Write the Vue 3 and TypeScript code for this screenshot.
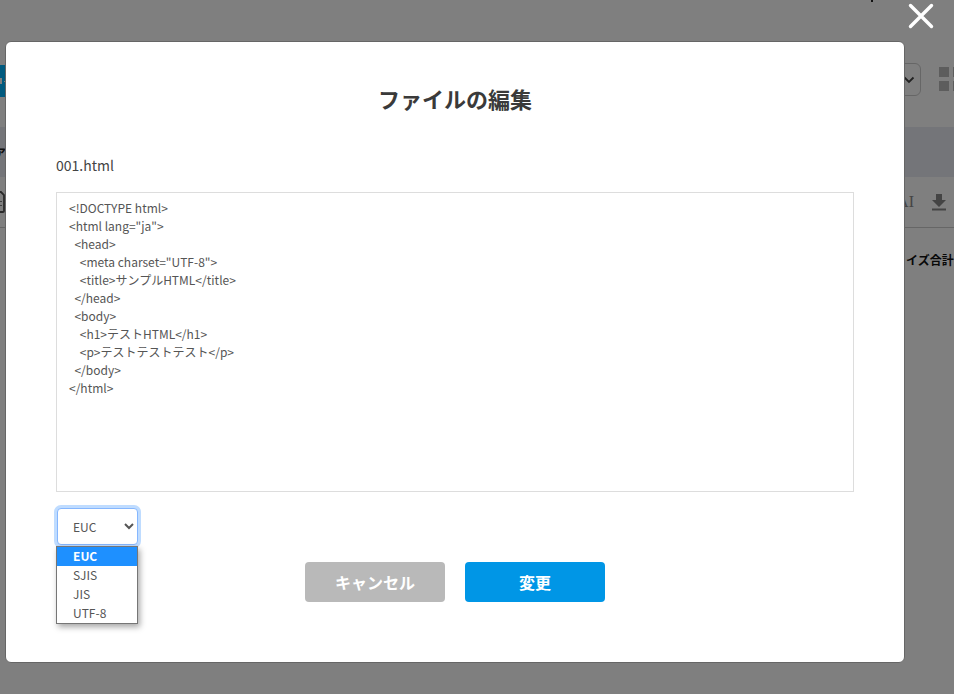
<script setup lang="ts">
const source = `<!DOCTYPE html>
<html lang="ja">
  <head>
    <meta charset="UTF-8">
    <title>サンプルHTML</title>
  </head>
  <body>
    <h1>テストHTML</h1>
    <p>テストテストテスト</p>
  </body>
</html>`
const encodings: string[] = ['EUC', 'SJIS', 'JIS', 'UTF-8']
</script>

<template>
  <div class="page">
    <div class="bg">
      <span class="bg-tick"></span>
      <div class="bg-top">
        <div class="bg-blue"><span class="bg-blue-mark"></span><span class="bg-blue-dash"></span></div>
        <div class="bg-controls">
          <div class="bg-select">
            <svg width="12" height="8" viewBox="0 0 12 8"><path d="M1.500 1.500 6 6l4.500-4.500" fill="none" stroke="#444" stroke-width="1.800" /></svg>
          </div>
          <div class="bg-grid"><i></i><i></i><i></i><i></i></div>
        </div>
      </div>
      <div class="bg-band"><span class="bg-band-text">ア</span></div>
      <div class="bg-tools">
        <svg class="bg-file" width="6" height="24" viewBox="0 0 6 24"><path d="M-6 2h7l3 3v16q0 1-1 1h-9z" fill="none" stroke="#555" stroke-width="1.800" /><path d="M1 11v1M1 15v1" stroke="#555" stroke-width="1.500" /></svg>
        <div class="bg-tool-right">
          <span class="bg-ai">AI</span>
          <svg width="14" height="17" viewBox="0 0 14 17"><path d="M4 0h6v6h4l-7 7-7-7h4zM0 14.500h14v2H0z" fill="#888" /></svg>
        </div>
      </div>
      <div class="bg-total">イズ合計</div>
    </div>

    <div class="overlay">
      <svg class="close" width="26" height="26" viewBox="0 0 26 26" aria-label="閉じる">
        <path d="M2.500 2.500 23.500 23.500M23.500 2.500 2.500 23.500" stroke="#fff" stroke-width="3.400" stroke-linecap="round" fill="none" />
      </svg>
      <section class="modal">
        <h2 class="title">ファイルの編集</h2>
        <p class="filename">001.html</p>
        <textarea class="editor" readonly :value="source"></textarea>
        <div class="select-wrap">
          <select class="select">
            <option v-for="e in encodings" :key="e">{{ e }}</option>
          </select>
          <ul class="options">
            <li v-for="(e, i) in encodings" :key="e" :class="{ active: i === 0 }">{{ e }}</li>
          </ul>
        </div>
        <div class="actions">
          <button class="btn cancel" type="button">キャンセル</button>
          <button class="btn submit" type="button">変更</button>
        </div>
      </section>
    </div>
  </div>
</template>

<style>
html, body { margin: 0; background: #fff; }
</style>

<style scoped>
.page {
  position: relative;
  width: 954px;
  height: 694px;
  overflow: hidden;
  font-family: "Noto Sans CJK JP", "Noto Sans", sans-serif;
  color: #333;
}
.bg { display: flex; flex-direction: column; height: 100%; }
.bg-tick {
  position: absolute;
  left: 871px;
  top: 0;
  width: 2px;
  height: 2px;
  background: #222;
}
.bg-top {
  height: 127px;
  display: flex;
  justify-content: space-between;
  padding-top: 65px;
  box-sizing: border-box;
}
.bg-blue {
  width: 10px;
  height: 32px;
  background: #00b4ff;
  display: flex;
  align-items: center;
  gap: 2px;
}
.bg-blue-mark { width: 2px; height: 6px; background: #fff; }
.bg-blue-dash { width: 3px; height: 1px; background: #fff; }
.bg-controls { display: flex; gap: 18px; height: 32px; }
.bg-select {
  width: 40px;
  height: 33px;
  margin-top: -2px;
  box-sizing: border-box;
  border: 1px solid #ccc;
  border-radius: 6px;
  display: flex;
  align-items: center;
  justify-content: flex-end;
  padding-right: 5px;
}
.bg-grid {
  display: grid;
  grid-template-columns: 10px 10px;
  grid-auto-rows: 10px;
  gap: 4px;
  margin-top: 2px;
  width: 15px;
  overflow: hidden;
}
.bg-grid i { background: #bbb; display: block; }
.bg-band {
  height: 50px;
  background: #e8eaf2;
  display: flex;
  align-items: center;
  font-size: 12px;
}
.bg-band-text { margin-left: -6px; color: #222; font-weight: 700; }
.bg-tools {
  height: 51px;
  box-sizing: border-box;
  border-bottom: 1px solid #ccc;
  display: flex;
  align-items: center;
  justify-content: space-between;
}
.bg-file { display: block; }
.bg-tool-right { display: flex; align-items: center; gap: 18px; padding-right: 8px; }
.bg-ai { font-size: 16px; color: #888; font-family: "Liberation Serif", serif; }
.bg-total {
  padding: 23px 0 0;
  align-self: flex-end;
  width: 48px;
  font-size: 12px;
  line-height: 18px;
  font-weight: 700;
  white-space: nowrap;
  color: #111;
}
.overlay {
  position: absolute;
  inset: 0;
  background: rgba(0, 0, 0, 0.5);
}
.close { position: absolute; top: 3px; left: 908px; }
.modal {
  position: absolute;
  left: 5px;
  top: 41px;
  width: 900px;
  height: 622px;
  padding: 0 50px;
  box-sizing: border-box;
  background: #fff;
  border: 1px solid #666;
  border-radius: 6px;
}
.title {
  margin: 40px 0 0;
  font-size: 22px;
  line-height: 32px;
  font-weight: 700;
  text-align: center;
  color: #3a3a3a;
}
.filename {
  margin: 41px 0 0;
  font-size: 14px;
  line-height: 20px;
  color: #444;
}
.editor {
  display: block;
  width: 798px;
  height: 300px;
  margin: 17px 0 0;
  padding: 6px 12px;
  box-sizing: border-box;
  border: 1px solid #ddd;
  border-radius: 0;
  outline: none;
  resize: none;
  font-family: inherit;
  font-size: 12px;
  line-height: 18px;
  color: #555;
  overflow: hidden;
}
.select-wrap {
  position: relative;
  margin-top: 16px;
  margin-left: 1px;
  width: 80px;
  height: 37px;
}
.select {
  display: block;
  width: 81px;
  height: 37px;
  padding: 0 0 0 11px;
  box-sizing: border-box;
  border: 1px solid #86b7fe;
  border-radius: 4px;
  background-color: #fff;
  box-shadow: 0 0 0 3px #bfdcff;
  outline: none;
  font-family: inherit;
  font-size: 12px;
  color: #555;
}
.options {
  position: absolute;
  left: -1px;
  top: 38px;
  width: 82px;
  box-sizing: border-box;
  margin: 0;
  padding: 0;
  list-style: none;
  background: #fff;
  border: 1px solid #767676;
  box-shadow: 2px 3px 6px rgba(0, 0, 0, 0.35);
  font-size: 12px;
  color: #555;
}
.options li {
  height: 19px;
  line-height: 17px;
  padding-left: 16px;
}
.options li.active {
  background: #1e90ff;
  color: #fff;
  font-weight: 700;
}
.actions {
  display: flex;
  justify-content: center;
  gap: 20px;
  margin-top: 17px;
}
.btn {
  width: 140px;
  height: 40px;
  border: 0;
  border-radius: 4px;
  color: #fff;
  font-family: inherit;
  font-size: 16px;
  font-weight: 700;
  padding: 0;
}
.cancel { background: #b9b9b9; }
.submit { background: #0096e6; }
</style>
